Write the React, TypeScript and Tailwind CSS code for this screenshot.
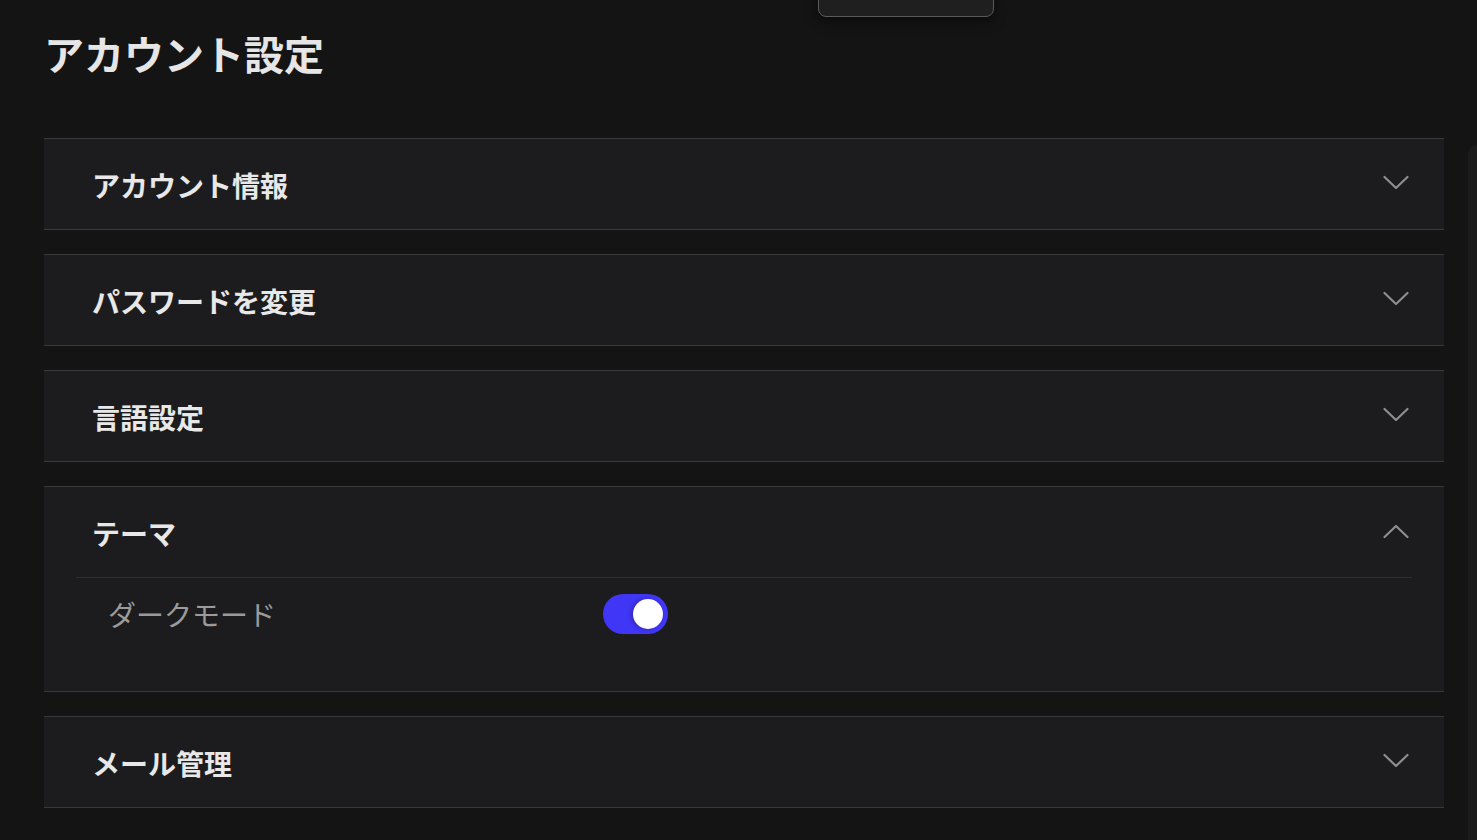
import React from "react";

const font = { fontFamily: '"Noto Sans CJK JP", "Noto Sans", sans-serif' };

function Chevron({ up }: { up?: boolean }) {
  return (
    <svg width="26" height="16" viewBox="0 0 26 16" className="text-[#8e8e8e]">
      {up ? (
        <polyline points="1.5,14 13,3 24.5,14" fill="none" stroke="currentColor" strokeWidth="2.2" strokeLinecap="round" strokeLinejoin="round" />
      ) : (
        <polyline points="1.5,2 13,13 24.5,2" fill="none" stroke="currentColor" strokeWidth="2.2" strokeLinecap="round" strokeLinejoin="round" />
      )}
    </svg>
  );
}

function Section({ title, open, children }: { title: string; open?: boolean; children?: React.ReactNode }) {
  return (
    <div className="mb-6 border-y border-[#3a3a3c] bg-[#1c1c1e]">
      <div className="flex h-[90px] items-center justify-between pl-[48px] pr-[35px]">
        <span className="pt-[1px] text-[28px] font-bold leading-none text-[#e8e8e8]">{title}</span>
        <span className="-mt-[2px]">
          <Chevron up={open} />
        </span>
      </div>
      {open && children}
    </div>
  );
}

export default function App() {
  return (
    <div className="relative flex min-h-[840px] w-full overflow-hidden bg-[#141414]" style={font}>
      <div className="w-[1468px] shrink-0 pl-[44px] pr-[24px] pt-[29px]">
        <h1 className="mb-[61px] text-[40px] font-bold leading-[48px] text-[#e6e6e6]">アカウント設定</h1>
        <Section title="アカウント情報" />
        <Section title="パスワードを変更" />
        <Section title="言語設定" />
        <Section title="テーマ" open>
          <div className="mx-8 border-t border-[#2f2f31]" />
          <div className="px-16 pb-[57px] pt-4">
            <div className="flex h-10 items-center">
              <span className="w-[495px] text-[28px] leading-none text-[#9b9b9b]">ダークモード</span>
              <button className="relative h-10 w-[65px] rounded-full bg-[#4036f5]">
                <span className="absolute right-[5px] top-[5px] h-[30px] w-[30px] rounded-full bg-white shadow-[-2px_0_4px_rgba(0,0,0,0.25)]" />
              </button>
            </div>
          </div>
        </Section>
        <Section title="メール管理" />
      </div>
      <div className="mt-[145px] flex-1 rounded-tl-2xl bg-[#1b1b1c]" />
      <div className="absolute left-[818px] top-[-30px] h-[47px] w-[176px] rounded-lg border border-[#5a5a5a] bg-[#1f1f1f] shadow-[0_4px_12px_rgba(0,0,0,0.5)]" />
    </div>
  );
}
